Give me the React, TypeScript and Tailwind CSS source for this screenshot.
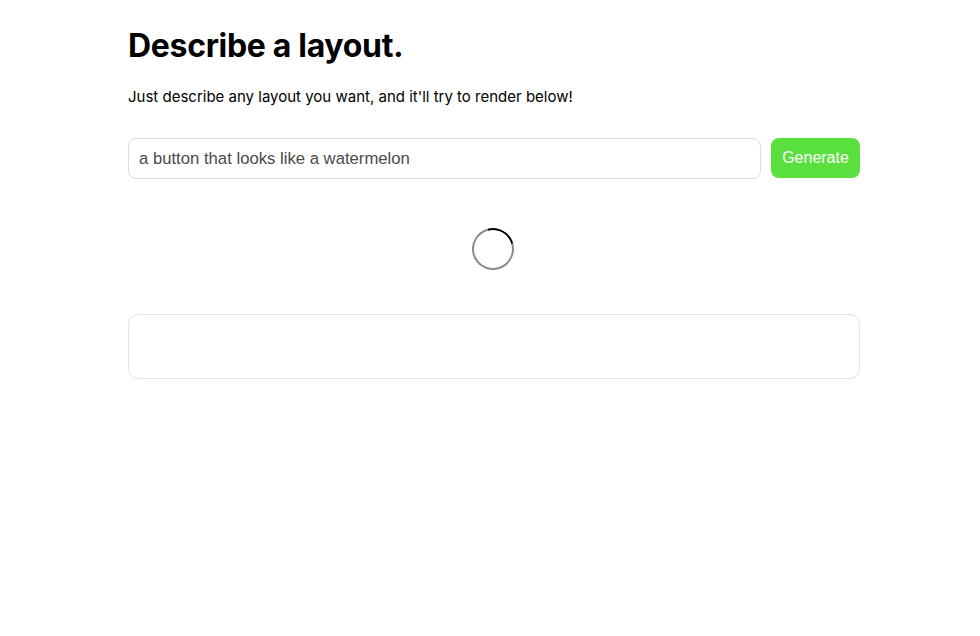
export default function App() {
  return (
    <div className="min-h-screen bg-white font-['Inter',sans-serif]">
      <div className="w-[732px] ml-[128px] pt-[25px]">
        <h1 className="text-[32px] font-bold text-black leading-[42px] tracking-[-0.01em]">Describe a layout.</h1>
        <p className="mt-[19px] text-[15px] text-black leading-[22px]">
          Just describe any layout you want, and it'll try to render below!
        </p>
        <div className="mt-[30px] flex gap-[10px]">
          <input
            type="text"
            defaultValue="a button that looks like a watermelon"
            className="flex-1 h-[41px] rounded-[8px] border border-[#dcdcdc] px-[10px] text-[16.7px] text-[#4a4a4a] font-['Liberation_Sans',sans-serif] outline-none"
          />
          <button className="w-[89px] h-[40px] rounded-[8px] bg-[#59e03e] text-white text-[16px] font-['Liberation_Sans',sans-serif]">
            Generate
          </button>
        </div>
        <div className="mt-[49px] flex justify-center">
          <div className="w-[42px] h-[42px] rounded-full border-2 border-[#8a8a8a] border-t-black rotate-[30deg] ml-[-2px]" />
        </div>
        <div className="mt-[44px] h-[65px] rounded-[10px] border border-[#e3e3e3]" />
      </div>
    </div>
  );
}
